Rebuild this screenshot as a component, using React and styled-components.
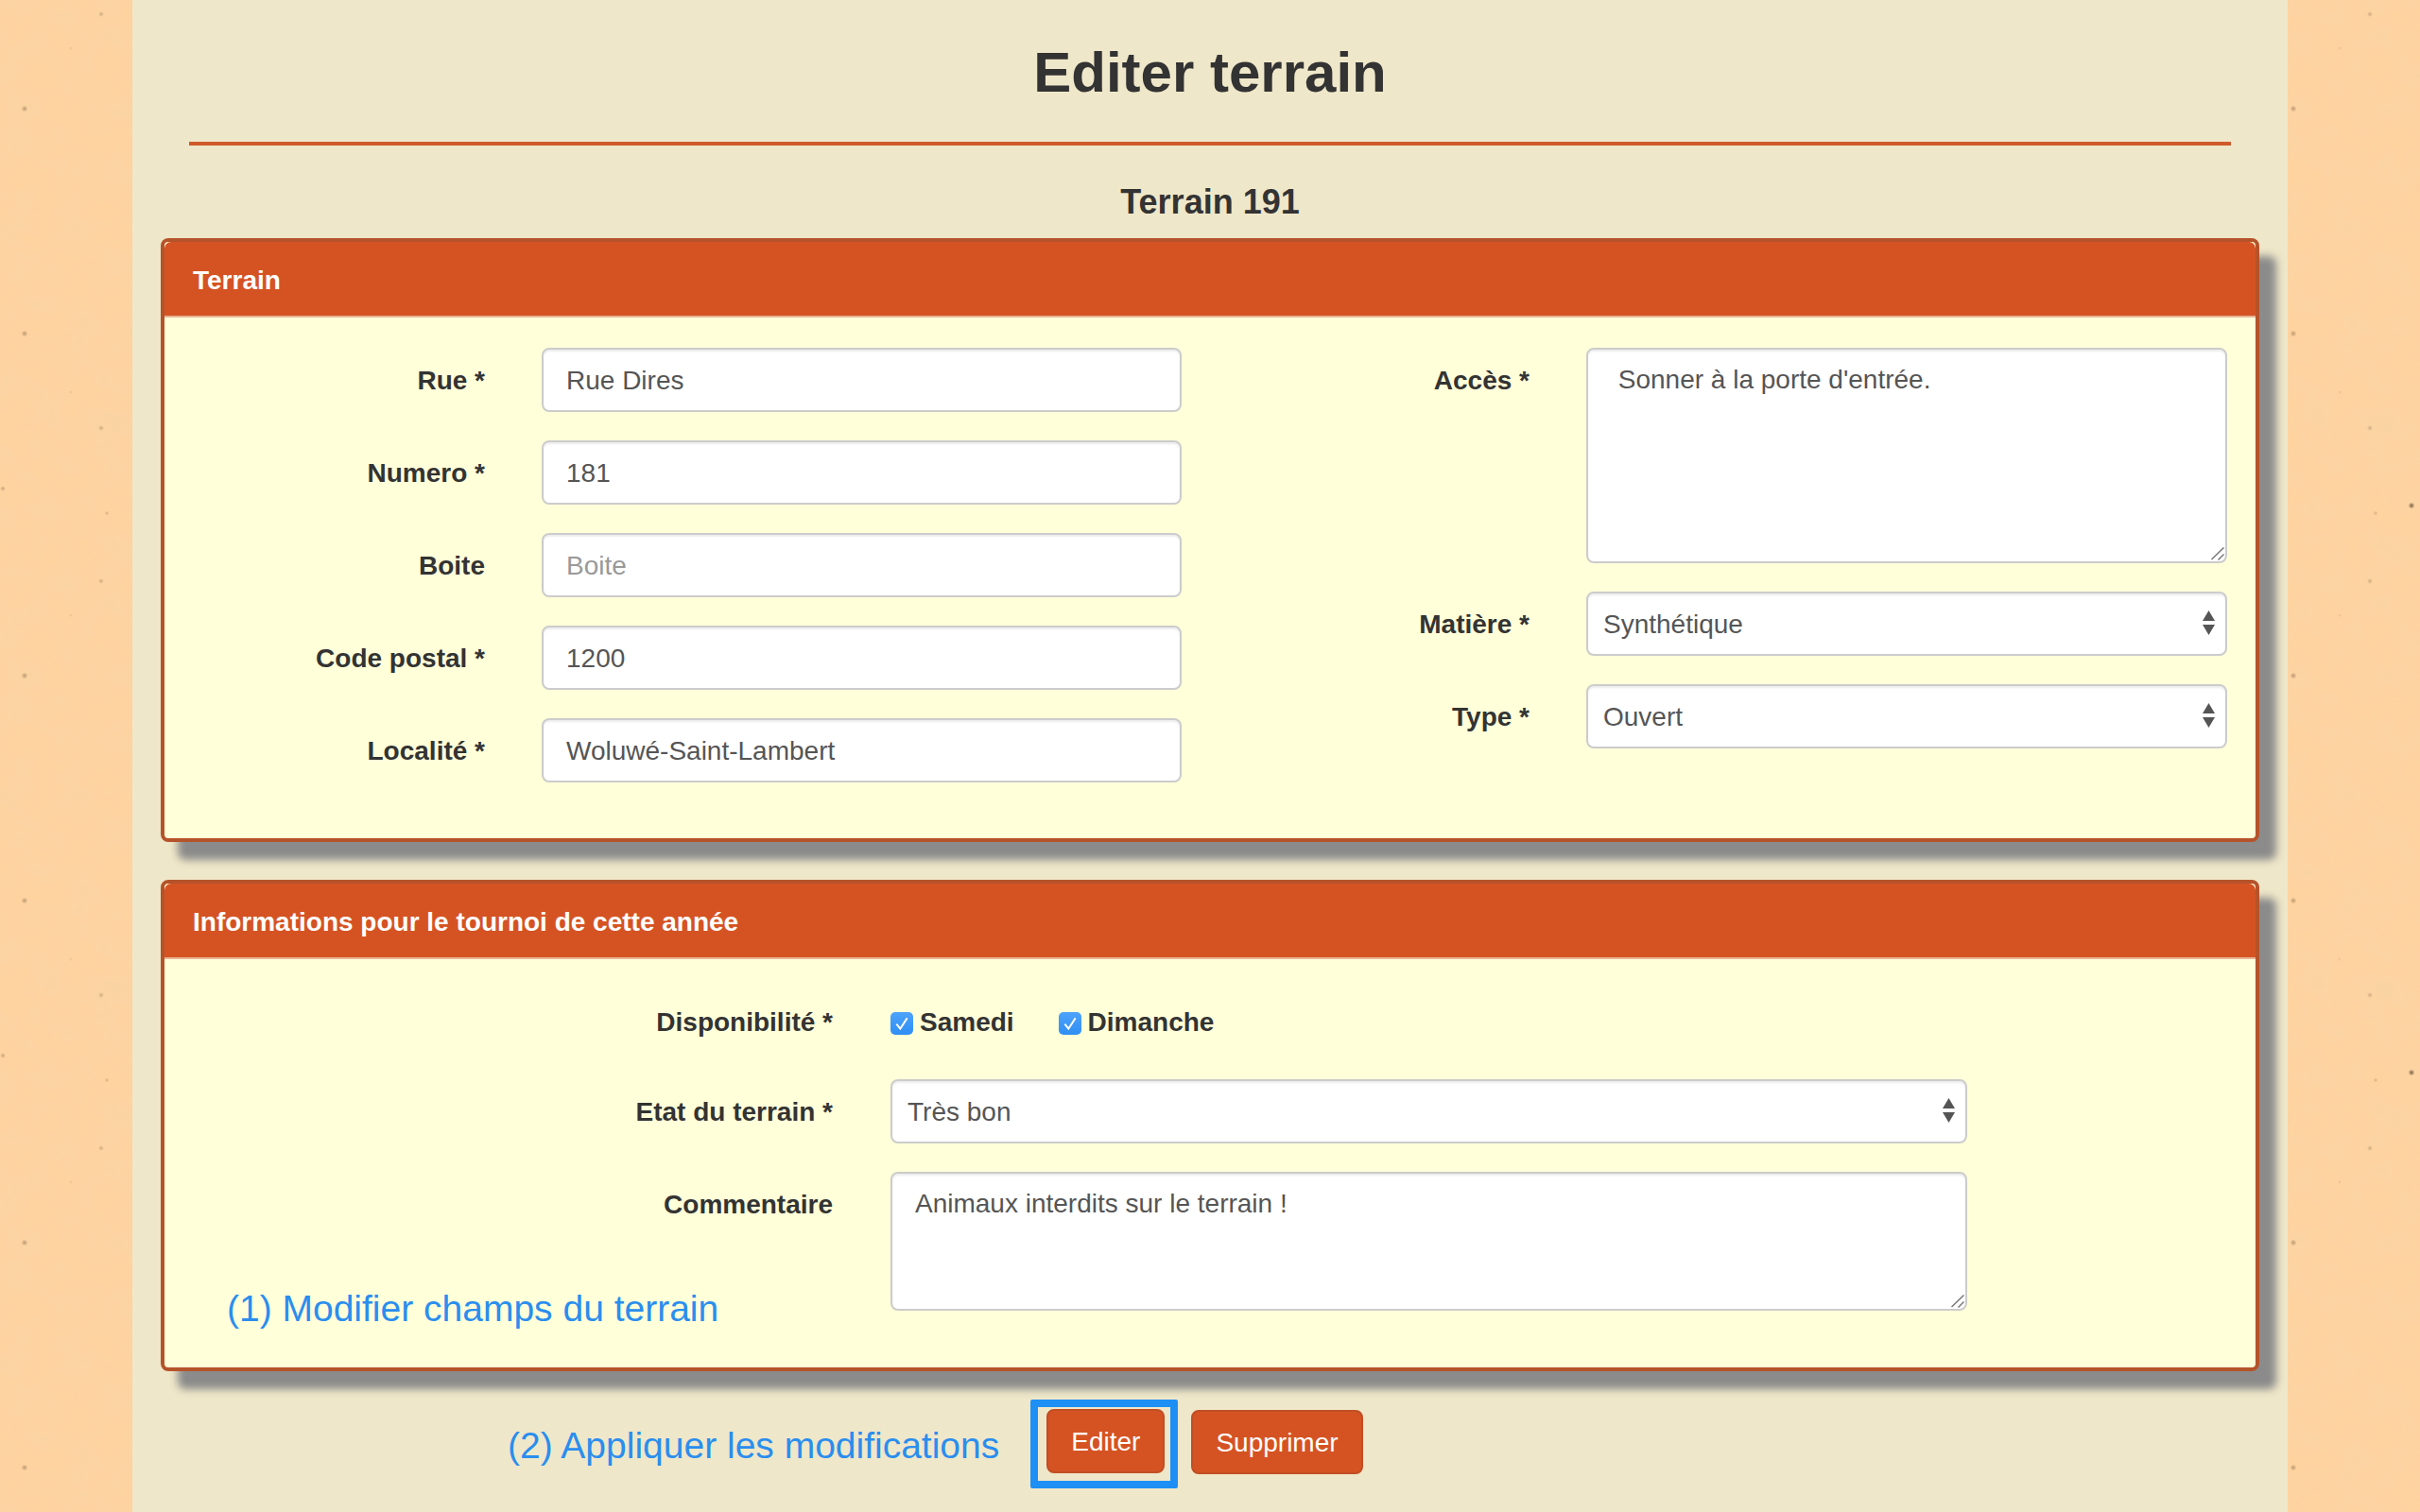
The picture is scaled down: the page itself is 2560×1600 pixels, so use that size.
import React from 'react';
import styled, { createGlobalStyle } from 'styled-components';

const noiseSvg = `<svg xmlns="http://www.w3.org/2000/svg" width="600" height="600"><filter id="n" x="0" y="0" width="100%" height="100%"><feTurbulence type="fractalNoise" baseFrequency="0.03" numOctaves="4" seed="7" stitchTiles="stitch"/><feColorMatrix values="0 0 0 0 0.88  0 0 0 0 0.66  0 0 0 0 0.42  0.45 0 0 0 -0.15"/></filter><rect width="600" height="600" filter="url(#n)"/></svg>`;

const speck = (x, y, r, alpha) =>
  `radial-gradient(circle ${r}px at ${x}px ${y}px, rgba(120, 95, 65, ${alpha}), rgba(120, 95, 65, 0))`;

const specks = [
  speck(107, 15, 3, 0.35),
  speck(26, 115, 3.5, 0.5),
  speck(26, 353, 3.5, 0.5),
  speck(107, 453, 3, 0.35),
  speck(3, 517, 3, 0.4),
  speck(113, 543, 2.5, 0.3),
  speck(151, 535, 3.5, 1),
  speck(75, 51, 2, 0.15),
  speck(75, 415, 2, 0.15),
].join(', ');

const GlobalStyle = createGlobalStyle`
  * {
    box-sizing: border-box;
  }

  html, body {
    margin: 0;
    padding: 0;
  }

  body {
    min-height: 1600px;
    background-color: #fed3a0;
    background-image: ${specks}, url("data:image/svg+xml,${encodeURIComponent(noiseSvg)}");
    background-size: 600px 600px;
    font-family: "Liberation Sans", Arial, sans-serif;
    font-size: 28px;
    line-height: 40px;
    color: #333;
  }
`;

const Page = styled.div`
  width: 2280px;
  height: 1600px;
  margin: 0 auto;
  padding: 0 30px;
  background: #efe7c9;
  overflow: hidden;
`;

const PageHeader = styled.header`
  margin: 0 30px;
  padding: 20px 0 16px;
  border-bottom: 4px solid #d05a2a;
`;

const Title = styled.h1`
  margin: 0;
  font-size: 60px;
  line-height: 114px;
  font-weight: 700;
  text-align: center;
`;

const SubTitle = styled.h4`
  margin: 40px 0 18px;
  font-size: 36px;
  line-height: 40px;
  font-weight: 700;
  text-align: center;
`;

const Panel = styled.section`
  position: relative;
  margin-bottom: 40px;
  border: 4px solid #b5532a;
  border-radius: 8px;
  background: #ffffd9;
  box-shadow: 18px 19px 8px #8b8b8b;
`;

const PanelHeading = styled.div`
  height: 80px;
  padding: 21px 30px 0;
  border-bottom: 2px solid #e8b598;
  border-radius: 7px 7px 0 0;
  background: #d55323;
  color: #fff;
  font-weight: 700;
`;

const PanelBody = styled.div`
  display: flex;
  justify-content: space-between;
  padding: 32px 30px ${(p) => p.$bottom}px 0;
`;

const FormColumn = styled.div`
  display: grid;
  grid-template-columns: ${(p) => p.$label}px ${(p) => p.$control}px;
  column-gap: ${(p) => p.$gap || 60}px;
  row-gap: 30px;
  align-content: start;
`;

const Label = styled.label`
  padding-top: 15px;
  font-weight: 700;
  text-align: right;
`;

const fieldStyles = `
  display: block;
  width: 100%;
  border: 2px solid #ccc;
  border-radius: 8px;
  background: #fff;
  color: #555;
  font-family: "Liberation Sans", Arial, sans-serif;
  font-size: 28px;
  line-height: 40px;
  box-shadow: inset 0 2px 2px rgba(0, 0, 0, 0.075);
  outline: none;
`;

const Input = styled.input`
  ${fieldStyles}
  height: 68px;
  padding: 13px 24px 11px;

  &::placeholder {
    color: #999;
    opacity: 1;
  }
`;

const TextAreaWrap = styled.div`
  position: relative;
  height: ${(p) => p.$height}px;
`;

const TextArea = styled.textarea`
  ${fieldStyles}
  height: 100%;
  padding: 12px 24px;
  resize: none;
`;

const ResizeGrip = styled.svg`
  position: absolute;
  right: 3px;
  bottom: 3px;
  width: 14px;
  height: 14px;
  stroke: #777;
  stroke-width: 1.5;
  pointer-events: none;
`;

const SelectWrap = styled.div`
  position: relative;
  height: 68px;
`;

const Select = styled.select`
  ${fieldStyles}
  height: 68px;
  padding: 1px 40px 0 16px;
  appearance: none;
`;

const Arrows = styled.svg`
  position: absolute;
  top: 20px;
  right: 13px;
  width: 13px;
  height: 26px;
  fill: #555;
  pointer-events: none;
`;

const CheckRow = styled.div`
  display: flex;
  height: 65px;
  padding-top: 15px;
  gap: 47px;
`;

const CheckLabel = styled.label`
  display: flex;
  gap: 7px;
  font-weight: 700;
`;

const CheckBox = styled.span`
  display: flex;
  align-items: center;
  justify-content: center;
  width: 24px;
  height: 24px;
  margin-top: 9px;
  border-radius: 5px;
  background: linear-gradient(#4ea3fb, #2f8ef4);
`;

const Annotation = styled.div`
  color: #2a8eee;
  font-size: 39px;
  line-height: 50px;
  white-space: nowrap;
`;

const PanelNote = styled(Annotation)`
  position: absolute;
  left: 66px;
  bottom: 37px;
`;

const Actions = styled.div`
  display: flex;
  align-items: center;
  margin-top: -10px;
  padding-left: 367px;
`;

const ActionNote = styled(Annotation)`
  margin-top: 4px;
`;

const FocusFrame = styled.div`
  margin-left: 33px;
  padding: 2px 6px 8px 9px;
  border: 8px solid #1e8ff5;
  border-radius: 2px;
`;

const Button = styled.button`
  display: block;
  height: 68px;
  padding: 2px 24px 0;
  border: 2px solid #c14e24;
  border-radius: 8px;
  background: #d55323;
  color: #fff;
  font-family: "Liberation Sans", Arial, sans-serif;
  font-size: 28px;
  line-height: 40px;
`;

const DeleteButton = styled(Button)`
  margin-left: 14px;
  margin-top: -5px;
`;

const SelectField = ({ value, options }) => (
  <SelectWrap>
    <Select defaultValue={value}>
      {options.map((o) => (
        <option key={o}>{o}</option>
      ))}
    </Select>
    <Arrows viewBox="0 0 13 26">
      <path d="M6.5 0 13 11H0z" />
      <path d="M0 15h13L6.5 26z" />
    </Arrows>
  </SelectWrap>
);

const TextAreaField = ({ height, value }) => (
  <TextAreaWrap $height={height}>
    <TextArea defaultValue={value} />
    <ResizeGrip viewBox="0 0 14 14">
      <path d="M0.5 13 13.5 0.5" />
      <path d="M7.5 13.5 13.5 7.5" />
    </ResizeGrip>
  </TextAreaWrap>
);

const Check = ({ children }) => (
  <CheckLabel>
    <CheckBox>
      <svg width="18" height="18" viewBox="0 0 16 16" fill="none" stroke="#fff" strokeWidth="1.7">
        <path d="M3 8.5 6.5 13 13 3" />
      </svg>
    </CheckBox>
    {children}
  </CheckLabel>
);

const Field = ({ label, children }) => (
  <>
    <Label>{label}</Label>
    {children}
  </>
);

const App = () => (
  <Page>
    <GlobalStyle />
    <PageHeader>
      <Title>Editer terrain</Title>
    </PageHeader>
    <SubTitle>Terrain 191</SubTitle>

    <Panel>
      <PanelHeading>Terrain</PanelHeading>
      <PanelBody $bottom={59}>
        <FormColumn $label={339} $control={677}>
          <Field label="Rue *">
            <Input defaultValue="Rue Dires" />
          </Field>
          <Field label="Numero *">
            <Input defaultValue="181" />
          </Field>
          <Field label="Boite">
            <Input placeholder="Boite" />
          </Field>
          <Field label="Code postal *">
            <Input defaultValue="1200" />
          </Field>
          <Field label="Localité *">
            <Input defaultValue="Woluwé-Saint-Lambert" />
          </Field>
        </FormColumn>
        <FormColumn $label={298} $control={678}>
          <Field label="Accès *">
            <TextAreaField height={228} value=" Sonner à la porte d'entrée." />
          </Field>
          <Field label="Matière *">
            <SelectField value="Synthétique" options={['Synthétique', 'Herbe', 'Terre battue']} />
          </Field>
          <Field label="Type *">
            <SelectField value="Ouvert" options={['Ouvert', 'Couvert']} />
          </Field>
        </FormColumn>
      </PanelBody>
    </Panel>

    <Panel>
      <PanelHeading>Informations pour le tournoi de cette année</PanelHeading>
      <PanelBody $bottom={60}>
        <FormColumn $label={707} $control={1139} $gap={61}>
          <Field label="Disponibilité *">
            <CheckRow>
              <Check>Samedi</Check>
              <Check>Dimanche</Check>
            </CheckRow>
          </Field>
          <Field label="Etat du terrain *">
            <SelectField value="Très bon" options={['Très bon', 'Bon', 'Moyen']} />
          </Field>
          <Field label="Commentaire">
            <TextAreaField height={147} value="Animaux interdits sur le terrain !" />
          </Field>
        </FormColumn>
      </PanelBody>
      <PanelNote>(1) Modifier champs du terrain</PanelNote>
    </Panel>

    <Actions>
      <ActionNote>(2) Appliquer les modifications</ActionNote>
      <FocusFrame>
        <Button>Editer</Button>
      </FocusFrame>
      <DeleteButton>Supprimer</DeleteButton>
    </Actions>
  </Page>
);

export default App;
